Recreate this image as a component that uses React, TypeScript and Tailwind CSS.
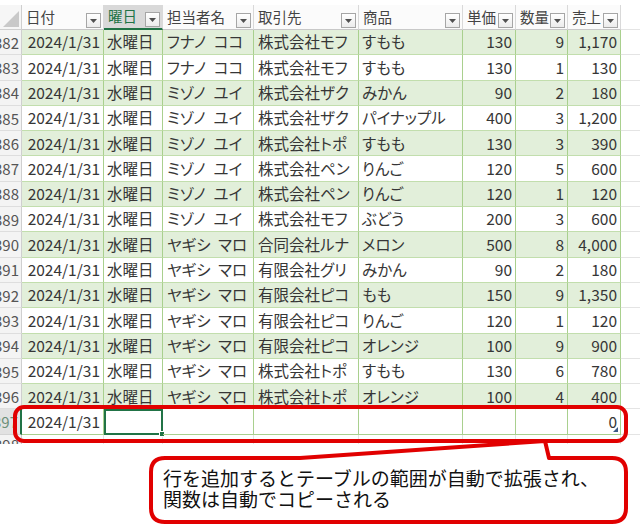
import React from "react";

type Row = {
  n: number;
  date: string;
  day: string;
  person: string;
  client: string;
  item: string;
  price: string;
  qty: string;
  sales: string;
};

const rows: Row[] = [
  { n: 382, date: "2024/1/31", day: "水曜日", person: "フナノ\u2002ココ", client: "株式会社モフ", item: "すもも", price: "130", qty: "9", sales: "1,170" },
  { n: 383, date: "2024/1/31", day: "水曜日", person: "フナノ\u2002ココ", client: "株式会社モフ", item: "すもも", price: "130", qty: "1", sales: "130" },
  { n: 384, date: "2024/1/31", day: "水曜日", person: "ミゾノ\u2002ユイ", client: "株式会社ザク", item: "みかん", price: "90", qty: "2", sales: "180" },
  { n: 385, date: "2024/1/31", day: "水曜日", person: "ミゾノ\u2002ユイ", client: "株式会社ザク", item: "パイナップル", price: "400", qty: "3", sales: "1,200" },
  { n: 386, date: "2024/1/31", day: "水曜日", person: "ミゾノ\u2002ユイ", client: "株式会社トポ", item: "すもも", price: "130", qty: "3", sales: "390" },
  { n: 387, date: "2024/1/31", day: "水曜日", person: "ミゾノ\u2002ユイ", client: "株式会社ペン", item: "りんご", price: "120", qty: "5", sales: "600" },
  { n: 388, date: "2024/1/31", day: "水曜日", person: "ミゾノ\u2002ユイ", client: "株式会社ペン", item: "りんご", price: "120", qty: "1", sales: "120" },
  { n: 389, date: "2024/1/31", day: "水曜日", person: "ミゾノ\u2002ユイ", client: "株式会社モフ", item: "ぶどう", price: "200", qty: "3", sales: "600" },
  { n: 390, date: "2024/1/31", day: "水曜日", person: "ヤギシ\u2002マロ", client: "合同会社ルナ", item: "メロン", price: "500", qty: "8", sales: "4,000" },
  { n: 391, date: "2024/1/31", day: "水曜日", person: "ヤギシ\u2002マロ", client: "有限会社グリ", item: "みかん", price: "90", qty: "2", sales: "180" },
  { n: 392, date: "2024/1/31", day: "水曜日", person: "ヤギシ\u2002マロ", client: "有限会社ピコ", item: "もも", price: "150", qty: "9", sales: "1,350" },
  { n: 393, date: "2024/1/31", day: "水曜日", person: "ヤギシ\u2002マロ", client: "有限会社ピコ", item: "りんご", price: "120", qty: "1", sales: "120" },
  { n: 394, date: "2024/1/31", day: "水曜日", person: "ヤギシ\u2002マロ", client: "有限会社ピコ", item: "オレンジ", price: "100", qty: "9", sales: "900" },
  { n: 395, date: "2024/1/31", day: "水曜日", person: "ヤギシ\u2002マロ", client: "株式会社トポ", item: "すもも", price: "130", qty: "6", sales: "780" },
  { n: 396, date: "2024/1/31", day: "水曜日", person: "ヤギシ\u2002マロ", client: "株式会社トポ", item: "オレンジ", price: "100", qty: "4", sales: "400" },
];

const widths = ["w-[82px]", "w-[59px]", "w-[91px]", "w-[105px]", "w-[104px]", "w-[53px]", "w-[52px]", "w-[53px]"];
const rightAligned = [true, false, false, false, false, true, true, true];
const headers = ["日付", "曜日", "担当者名", "取引先", "商品", "単価", "数量", "売上"];

function FilterButton() {
  return (
    <span className="flex h-[15px] w-[15px] shrink-0 items-center justify-center border border-[#a6a6a6] bg-gradient-to-b from-white to-[#ececec]">
      <svg width="7" height="4" viewBox="0 0 7 4">
        <path d="M0 0h7L3.5 4z" fill="#505050" />
      </svg>
    </span>
  );
}

function RowHeader({ n, selected }: { n: number; selected?: boolean }) {
  return (
    <div
      className={`flex h-full w-[22px] shrink-0 items-center justify-end overflow-hidden border-b pr-[2px] text-[15px] ${
        selected
          ? "border-b-[#d4d4d4] border-r-2 border-r-[#217346] bg-[#e2e2e2] text-[#6b8f78]"
          : "border-b-[#dedede] border-r border-r-[#cfcfcf] bg-[#f4f4f4] text-[#555]"
      }`}
    >
      <span className="whitespace-nowrap">{n}</span>
    </div>
  );
}

function DataRow({ r, band }: { r: Row; band: boolean }) {
  const values = [r.date, r.day, r.person, r.client, r.item, r.price, r.qty, r.sales];
  return (
    <div className="flex h-[25.3px]">
      <RowHeader n={r.n} />
      {values.map((v, i) => (
        <div
          key={i}
          className={`flex h-full shrink-0 items-center overflow-hidden whitespace-nowrap border-b border-r border-b-[#c2dead] border-r-[#a9d08e] px-[3px] ${widths[i]} ${
            rightAligned[i] ? "justify-end" : "justify-start"
          } ${i === 2 || i === 3 ? "pl-[4px]" : ""} ${band ? "bg-[#e2efda]" : "bg-white"}`}
        >
          {v}
        </div>
      ))}
      <div className="h-full flex-1 border-b border-[#e4e4e4]" />
    </div>
  );
}

export default function App() {
  return (
    <div className="relative h-[529px] w-[640px] overflow-hidden bg-white font-['Noto_Sans_CJK_JP',sans-serif] text-[15.5px] leading-none text-[#363636] [font-feature-settings:'palt']">
      <div className="pt-[5px]">
        {/* header */}
        <div className="flex h-[25px]">
          <div className="flex w-[22px] shrink-0 items-end justify-end border-b border-r border-[#cfcfcf] bg-[#f6f6f6] pb-[2px] pr-[2px]">
            <svg width="16" height="16" viewBox="0 0 16 16">
              <path d="M16 0V16H0z" fill="#c9c9c9" />
            </svg>
          </div>
          {headers.map((h, i) => {
            const active = i === 1;
            return (
              <div
                key={h}
                className={`flex h-full shrink-0 items-center justify-between border-r border-r-[#d9d9d9] pl-[4px] pr-[2px] text-[14.5px] ${widths[i]} ${
                  active
                    ? "border-b-2 border-b-[#217346] bg-[#d9d9d9] text-[#217346]"
                    : "border-b border-b-[#c8c8c8] bg-[#fbfbfb] text-[#444]"
                }`}
              >
                <span className="whitespace-nowrap">{h}</span>
                <span className="self-end pb-[1px]">
                  <FilterButton />
                </span>
              </div>
            );
          })}
          <div className="h-full flex-1 border-b border-[#e4e4e4]" />
        </div>

        {rows.map((r, i) => (
          <DataRow key={r.n} r={r} band={i % 2 === 0} />
        ))}

        {/* newly added row */}
        <div className="flex h-[25.3px]">
          <RowHeader n={397} selected />
          {widths.map((w, i) => {
            const sel = i === 1;
            return (
              <div
                key={i}
                className={`relative flex h-full shrink-0 items-center whitespace-nowrap px-[3px] ${w} ${
                  rightAligned[i] ? "justify-end" : "justify-start"
                } ${sel ? "border-2 border-[#217346]" : "border-b border-r border-[#a9d08e]"}`}
              >
                {i === 0 && "2024/1/31"}
                {i === 7 && "0"}
                {sel && (
                  <span className="absolute -bottom-[4px] -right-[4px] h-[6px] w-[6px] border border-white bg-[#217346]" />
                )}
                {i === 7 && (
                  <svg className="absolute bottom-[2px] right-[2px]" width="5" height="5" viewBox="0 0 5 5">
                    <path d="M5 0V5H0z" fill="#3b5a86" />
                  </svg>
                )}
              </div>
            );
          })}
          <div className="h-full flex-1 border-b border-[#e4e4e4]" />
        </div>

        {/* partially visible next row */}
        <div className="flex h-[9px] overflow-hidden">
          <div className="flex w-[22px] shrink-0 items-start justify-end overflow-hidden border-r border-[#cfcfcf] bg-[#f4f4f4] pr-[2px] pt-[2px] text-[15px] text-[#555]">
            <span>398</span>
          </div>
          {widths.map((w, i) => (
            <div key={i} className={`h-full shrink-0 border-r border-[#e4e4e4] ${w}`} />
          ))}
        </div>
      </div>

      {/* callout */}
      <svg className="absolute left-0 top-0" width="640" height="529" viewBox="0 0 640 529">
        <path
          d="M165 458 L300 458 L545 441 L549 458 L612 458 Q626 458 626 472 L626 508 Q626 522 612 522 L165 522 Q151 522 151 508 L151 472 Q151 458 165 458 Z"
          fill="white"
          stroke="#e10000"
          strokeWidth="4"
          strokeLinejoin="round"
        />
      </svg>
      <div className="absolute left-[163px] top-[467px] text-[19px] leading-[21px] text-[#111] [font-feature-settings:normal]">
        <p>行を追加するとテーブルの範囲が自動で拡張され、</p>
        <p>関数は自動でコピーされる</p>
      </div>

      {/* highlight around the new row */}
      <div className="absolute left-[13px] top-[405px] h-[38px] w-[615px] rounded-[11px] border-4 border-[#e10000]" />
    </div>
  );
}
